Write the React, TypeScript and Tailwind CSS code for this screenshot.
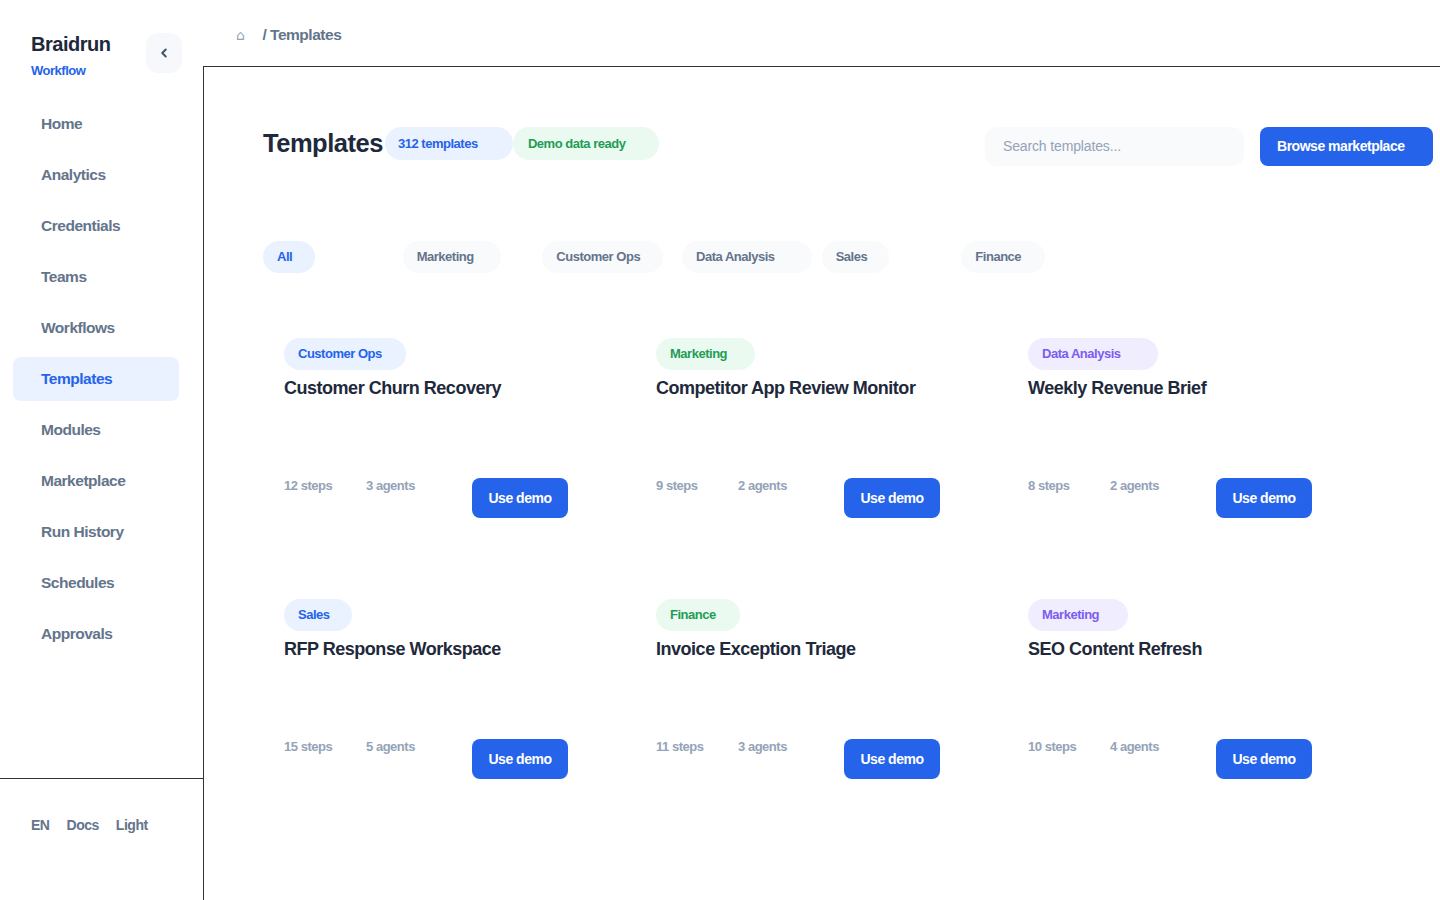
import { ChevronLeft } from 'lucide-react'

const navItems = [
  'Home',
  'Analytics',
  'Credentials',
  'Teams',
  'Workflows',
  'Templates',
  'Modules',
  'Marketplace',
  'Run History',
  'Schedules',
  'Approvals',
]

const filters = [
  { label: 'All', width: 52 },
  { label: 'Marketing', width: 98 },
  { label: 'Customer Ops', width: 121 },
  { label: 'Data Analysis', width: 130 },
  { label: 'Sales', width: 67 },
  { label: 'Finance', width: 84 },
]

type Tone = 'blue' | 'green' | 'violet'

const tagTone: Record<Tone, string> = {
  blue: 'bg-[#eaf1ff] text-[#2563eb]',
  green: 'bg-[#eafaf0] text-[#1f9d55]',
  violet: 'bg-[#f0edff] text-[#7c5cf0]',
}

const templates: { tag: string; tone: Tone; tagWidth: number; title: string; steps: number; agents: number }[] = [
  { tag: 'Customer Ops', tone: 'blue', tagWidth: 122, title: 'Customer Churn Recovery', steps: 12, agents: 3 },
  { tag: 'Marketing', tone: 'green', tagWidth: 99, title: 'Competitor App Review Monitor', steps: 9, agents: 2 },
  { tag: 'Data Analysis', tone: 'violet', tagWidth: 130, title: 'Weekly Revenue Brief', steps: 8, agents: 2 },
  { tag: 'Sales', tone: 'blue', tagWidth: 68, title: 'RFP Response Workspace', steps: 15, agents: 5 },
  { tag: 'Finance', tone: 'green', tagWidth: 84, title: 'Invoice Exception Triage', steps: 11, agents: 3 },
  { tag: 'Marketing', tone: 'violet', tagWidth: 100, title: 'SEO Content Refresh', steps: 10, agents: 4 },
]

function Sidebar(): JSX.Element {
  return (
    <aside className="w-[203px] shrink-0 h-[900px] flex flex-col bg-white">
      <div className="flex items-start justify-between pt-[31px] pl-[31px] pr-[21px]">
        <div>
          <div className="text-[20px] leading-[26px] font-bold text-[#1e293b]">Braidrun</div>
          <div className="mt-[6px] text-[13px] leading-4 font-bold text-[#2563eb]">Workflow</div>
        </div>
        <button className="mt-[2px] w-[36px] h-[40px] rounded-xl bg-[#f6f8fb] flex items-center justify-center text-[#475569]">
          <ChevronLeft size={14} strokeWidth={3.5} />
        </button>
      </div>

      <nav className="mt-[23px] pl-[13px] pr-[24px] flex flex-col gap-[7px]">
        {navItems.map((item) => {
          const active = item === 'Templates'
          return (
            <div
              key={item}
              className={`h-[44px] rounded-lg pl-[28px] flex items-center text-[15.5px] font-bold ${
                active ? 'bg-[#eaf1ff] text-[#2563eb]' : 'text-[#64748b]'
              }`}
            >
              {item}
            </div>
          )
        })}
      </nav>

      <div className="flex-1" />

      <div className="h-[122px] border-t border-[#333] pl-[31px] pt-[37px] flex gap-[17px] text-[14px] leading-[18px] font-bold text-[#64748b]">
        <span>EN</span>
        <span>Docs</span>
        <span>Light</span>
      </div>
    </aside>
  )
}

function TemplateCard({ t }: { t: (typeof templates)[number] }): JSX.Element {
  return (
    <div className="px-[21px] pt-[21px] pb-[21px] flex flex-col">
      <span
        className={`h-8 rounded-full pl-[14px] flex items-center text-[13px] font-bold ${tagTone[t.tone]}`}
        style={{ width: t.tagWidth }}
      >
        {t.tag}
      </span>
      <h3 className="mt-[6px] text-[18px] leading-[24px] font-bold text-[#1e293b]">{t.title}</h3>
      <div className="mt-[78px] flex items-start">
        <span className="w-[82px] text-[13px] leading-4 font-bold text-[#94a3b8]">{t.steps} steps</span>
        <span className="w-[106px] text-[13px] leading-4 font-bold text-[#94a3b8]">{t.agents} agents</span>
        <button className="w-[96px] h-[40px] rounded-lg bg-[#2563eb] text-white text-[14px] font-bold">
          Use demo
        </button>
      </div>
    </div>
  )
}

export default function App(): JSX.Element {
  return (
    <div className="w-[1440px] h-[900px] overflow-hidden flex bg-white tracking-[-0.03em] font-['Liberation_Sans',Arial,sans-serif]">
      <Sidebar />

      <div className="flex-1 flex flex-col min-w-0">
        <div className="h-[66px] shrink-0 pl-[33px] flex items-center gap-[18px] pt-[4px]">
          <span className="text-[14px] text-[#94a3b8] font-['DejaVu_Sans',sans-serif]">⌂</span>
          <span className="text-[15.5px] font-bold text-[#64748b]">/ Templates</span>
        </div>

        <main className="flex-1 border-l border-t border-[#333] pl-[59px] pt-[60px]">
          <div className="w-[1170px] flex items-start">
            <h1 className="text-[25.5px] leading-8 font-bold text-[#1e293b]">Templates</h1>
            <span className="ml-[2px] w-[128px] h-[33px] rounded-full bg-[#eaf1ff] text-[#2563eb] text-[13px] font-bold flex items-center pl-[13px]">
              312 templates
            </span>
            <span className="w-[146px] h-[33px] rounded-full bg-[#eafaf0] text-[#1f9d55] text-[13px] font-bold flex items-center pl-[15px]">
              Demo data ready
            </span>

            <div className="ml-auto w-[259px] h-[39px] rounded-xl bg-[#f8fafc] flex items-center pl-[18px] text-[14px] tracking-[-0.01em] text-[#94a3b8]">
              Search templates...
            </div>
            <button className="ml-[16px] w-[173px] h-[39px] rounded-lg bg-[#2563eb] text-white text-[14px] font-bold text-left pl-[17px]">
              Browse marketplace
            </button>
          </div>

          <div className="mt-[75px] w-[838px] grid grid-cols-6">
            {filters.map((f) => (
              <span
                key={f.label}
                className={`h-8 rounded-full pl-[14px] flex items-center text-[13px] font-bold ${
                  f.label === 'All' ? 'bg-[#eaf1ff] text-[#2563eb]' : 'bg-[#f8fafc] text-[#64748b]'
                }`}
                style={{ width: f.width }}
              >
                {f.label}
              </span>
            ))}
          </div>

          <div className="mt-[44px] w-[1094px] grid grid-cols-3 gap-x-[22px] gap-y-[39px]">
            {templates.map((t) => (
              <TemplateCard key={t.title} t={t} />
            ))}
          </div>
        </main>
      </div>
    </div>
  )
}
